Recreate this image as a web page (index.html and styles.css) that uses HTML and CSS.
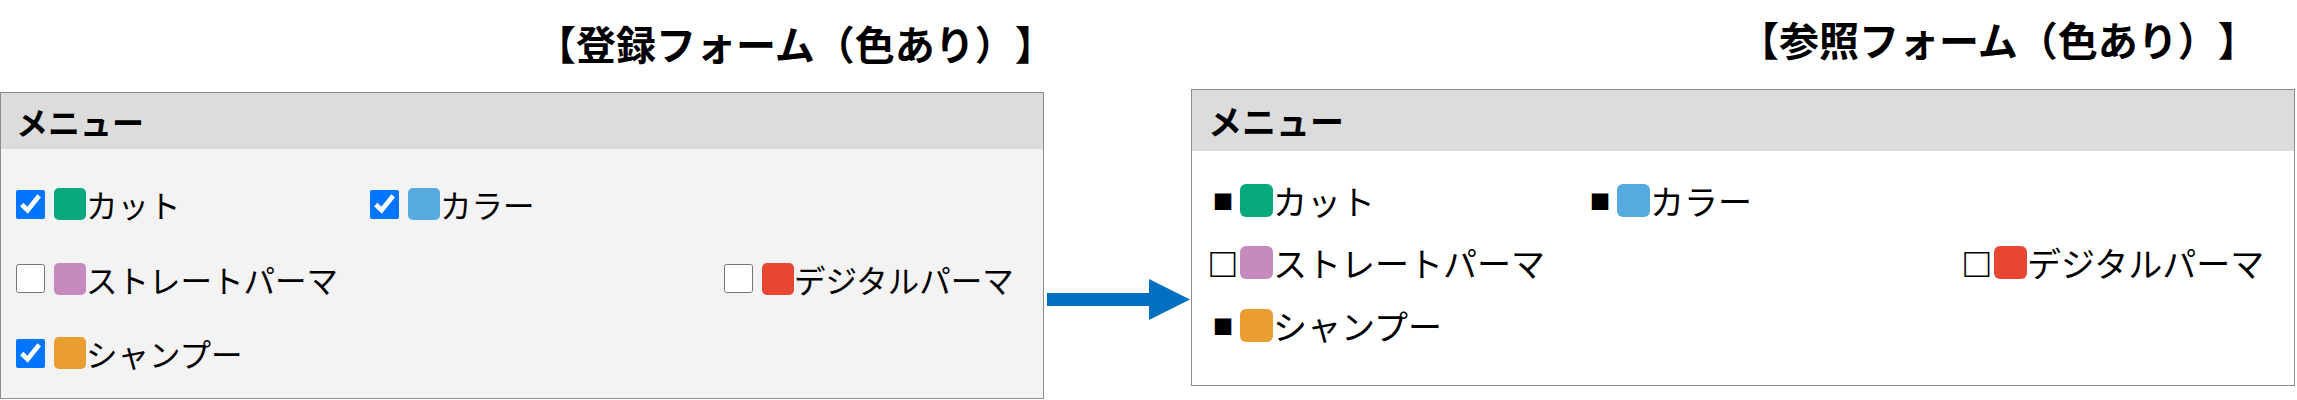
FILE: index.html
```html
<!DOCTYPE html>
<html lang="ja">
<head>
    <meta charset="UTF-8">
    <meta name="viewport" content="width=device-width, initial-scale=1.0">
    <title>メニュー フォーム（色あり）</title>
    <link rel="stylesheet" href="styles.css">
</head>
<body>

    <div class="compare">
        <section class="form-view form-edit">
            <h2 class="form-title">【登録フォーム（色あり）】</h2>
            <div class="menu-box">
                <div class="menu-head">メニュー</div>
                <div class="menu-list">
                    <label class="menu-item"><input type="checkbox" checked><span class="swatch cut"></span>カット</label>
                    <label class="menu-item col-2"><input type="checkbox" checked><span class="swatch color"></span>カラー</label>
                    <label class="menu-item col-1"><input type="checkbox"><span class="swatch straight"></span>ストレートパーマ</label>
                    <label class="menu-item col-3"><input type="checkbox"><span class="swatch digital"></span>デジタルパーマ</label>
                    <label class="menu-item col-1"><input type="checkbox" checked><span class="swatch shampoo"></span>シャンプー</label>
                </div>
            </div>
        </section>

        <div class="arrow">
            <svg width="143" height="41" viewBox="0 0 143 41">
                <rect x="0" y="14" width="103" height="13" fill="#0070c0"/>
                <polygon points="102,0 143,20.5 102,41" fill="#0070c0"/>
            </svg>
        </div>

        <section class="form-view form-read">
            <h2 class="form-title">【参照フォーム（色あり）】</h2>
            <div class="menu-box">
                <div class="menu-head">メニュー</div>
                <div class="menu-list">
                    <div class="menu-item"><span class="mark">■</span><span class="swatch cut"></span>カット</div>
                    <div class="menu-item col-2"><span class="mark">■</span><span class="swatch color"></span>カラー</div>
                    <div class="menu-item col-1"><span class="mark off">□</span><span class="swatch straight"></span>ストレートパーマ</div>
                    <div class="menu-item col-3"><span class="mark off">□</span><span class="swatch digital"></span>デジタルパーマ</div>
                    <div class="menu-item col-1"><span class="mark">■</span><span class="swatch shampoo"></span>シャンプー</div>
                </div>
            </div>
        </section>
    </div>

</body>
</html>
```

FILE: styles.css
```css
body {
    margin: 0;
    background-color: #fff;
    color: #000;
    font-family: "Noto Sans CJK JP", sans-serif;
    text-spacing-trim: space-all;
}
.compare {
    display: flex;
    align-items: flex-start;
}
.form-edit {
    width: 1044px;
    padding-top: 19px;
}
.form-read {
    width: 1104px;
    margin-left: 1px;
    padding-top: 15px;
}
.form-title {
    margin: 0 0 25px;
    font-size: 40px;
    line-height: 48px;
    font-weight: bold;
    white-space: nowrap;
}
.form-edit .form-title {
    padding-left: 536px;
}
.form-read .form-title {
    padding-left: 548px;
    margin-bottom: 26px;
}
.arrow {
    flex: none;
    width: 143px;
    height: 41px;
    margin: 279px 0 0 3px;
}
.arrow svg {
    display: block;
}
.menu-box {
    border: 1px solid #8c8c8c;
}
.menu-head {
    display: flex;
    align-items: center;
    background-color: #dcdcdc;
    font-weight: bold;
}
.form-edit .menu-head {
    height: 56px;
    padding-left: 15px;
    font-size: 32px;
}
.form-read .menu-head {
    height: 61px;
    padding-left: 16px;
    font-size: 34px;
}
.menu-list {
    display: grid;
}
.form-edit .menu-list {
    grid-template-columns: repeat(3, 354px);
    grid-auto-rows: 74.5px;
    padding: 18px 15px 7px;
    background-color: #f3f3f3;
    font-size: 31.5px;
}
.form-read .menu-list {
    grid-template-columns: repeat(3, 377px);
    grid-auto-rows: 62.5px;
    padding: 17.75px 17px 29px;
    background-color: #fff;
    font-size: 34px;
}
.col-1 { grid-column: 1; }
.col-2 { grid-column: 2; }
.col-3 { grid-column: 3; }
.menu-item {
    display: flex;
    align-items: center;
    white-space: nowrap;
}
.menu-item input {
    width: 29px;
    height: 29px;
    margin: 0 9px 0 0;
}
.swatch {
    display: inline-block;
    flex: none;
    width: 32px;
    height: 32px;
    border-radius: 5px;
}
.form-read .swatch {
    width: 33px;
    height: 33px;
    border-radius: 6px;
}
.mark {
    width: 28px;
    margin-right: 3px;
    text-align: center;
    font-family: "Liberation Sans", sans-serif;
    line-height: 1;
}
.mark.off {
    font-size: 42px;
}
.cut { background-color: #07a87c; }
.color { background-color: #55aadf; }
.straight { background-color: #c58bbf; }
.digital { background-color: #e74732; }
.shampoo { background-color: #eb9e30; }
```
